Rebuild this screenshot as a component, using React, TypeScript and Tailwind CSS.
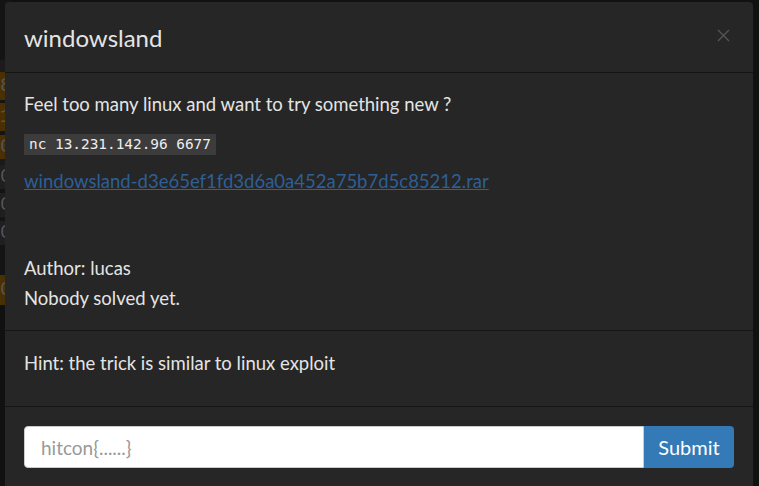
import React from 'react';

const stripRows = [
  { h: 60, bg: 'bg-[#141414]', ch: '' },
  { h: 12, bg: 'bg-[#1b1b1b]', ch: '' },
  { h: 28, bg: 'bg-[#4a3000]', ch: '8' },
  { h: 3, bg: 'bg-[#141414]', ch: '' },
  { h: 28, bg: 'bg-[#4a3000]', ch: '1' },
  { h: 4, bg: 'bg-[#141414]', ch: '' },
  { h: 24, bg: 'bg-[#4a3000]', ch: '0' },
  { h: 6, bg: 'bg-[#1a1a1a]', ch: '' },
  { h: 24, bg: 'bg-[#1f1f1f]', ch: '0' },
  { h: 4, bg: 'bg-[#141414]', ch: '' },
  { h: 24, bg: 'bg-[#1f1f1f]', ch: '0' },
  { h: 4, bg: 'bg-[#141414]', ch: '' },
  { h: 24, bg: 'bg-[#1f1f1f]', ch: '0' },
  { h: 30, bg: 'bg-[#141414]', ch: '' },
  { h: 30, bg: 'bg-[#4a3000]', ch: '0' },
];

export default function App() {
  return (
    <div className="relative w-[759px] h-[486px] overflow-hidden bg-[#111111] font-['Lato','Liberation_Sans',sans-serif]">
      {/* page behind the backdrop */}
      <div className="flex flex-col w-[12px]">
        {stripRows.map((r, i) => (
          <div
            key={i}
            className={`${r.bg} flex items-center text-[#555] text-[20px] leading-none font-['Liberation_Mono',monospace] overflow-hidden`}
            style={{ height: r.h }}
          >
            {r.ch}
          </div>
        ))}
      </div>

      {/* modal */}
      <div className="absolute left-[5px] top-[2px] w-[748px] h-[500px] bg-[#262626] rounded-[4px] text-[#e4e4e4]">
        <div className="flex items-center justify-between h-[71px] px-[19px] border-b border-[#151515]">
          <h4 className="text-[24px] leading-none mt-[1px]">windowsland</h4>
          <button className="text-[#555] mr-[4px] mt-[-4px]">
            <svg width="13" height="13" viewBox="0 0 13 13" fill="none" stroke="currentColor" strokeWidth="1.4">
              <path d="M1 1L12 12M12 1L1 12" />
            </svg>
          </button>
        </div>

        <div className="px-[19px] pt-[21px] pb-[21px] border-b border-[#151515] text-[18.5px] leading-[21px]">
          <p className="h-[21px]">Feel too many linux and want to try something new ?</p>
          <div className="mt-[17px]">
            <code className="inline-block bg-[#3c3c3c] px-[5px] h-[21px] leading-[21px] text-[14.4px] font-['DejaVu_Sans_Mono',monospace] text-[#eee]">
              nc 13.231.142.96 6677
            </code>
          </div>
          <p className="mt-[16px]">
            <a href="#" className="text-[#2e5f95] underline">
              windowsland-d3e65ef1fd3d6a0a452a75b7d5c85212.rar
            </a>
          </p>
          <p className="mt-[66px]">Author: lucas</p>
          <p className="mt-[9px]">Nobody solved yet.</p>
        </div>

        <div className="px-[19px] pt-[22px] pb-[32px] border-b border-[#151515] text-[18.5px] leading-[21px]">
          <p>Hint: the trick is similar to linux exploit</p>
        </div>

        <div className="px-[19px] pt-[19px] flex">
          <input
            placeholder="hitcon{......}"
            className="flex-1 h-[42px] bg-white rounded-l-[4px] border border-[#ccc] px-[16px] text-[19px] text-[#333] placeholder:text-[#999] outline-none"
          />
          <button className="w-[90px] h-[42px] bg-[#337ab7] text-white text-[20px] rounded-r-[4px]">
            Submit
          </button>
        </div>
      </div>
    </div>
  );
}
